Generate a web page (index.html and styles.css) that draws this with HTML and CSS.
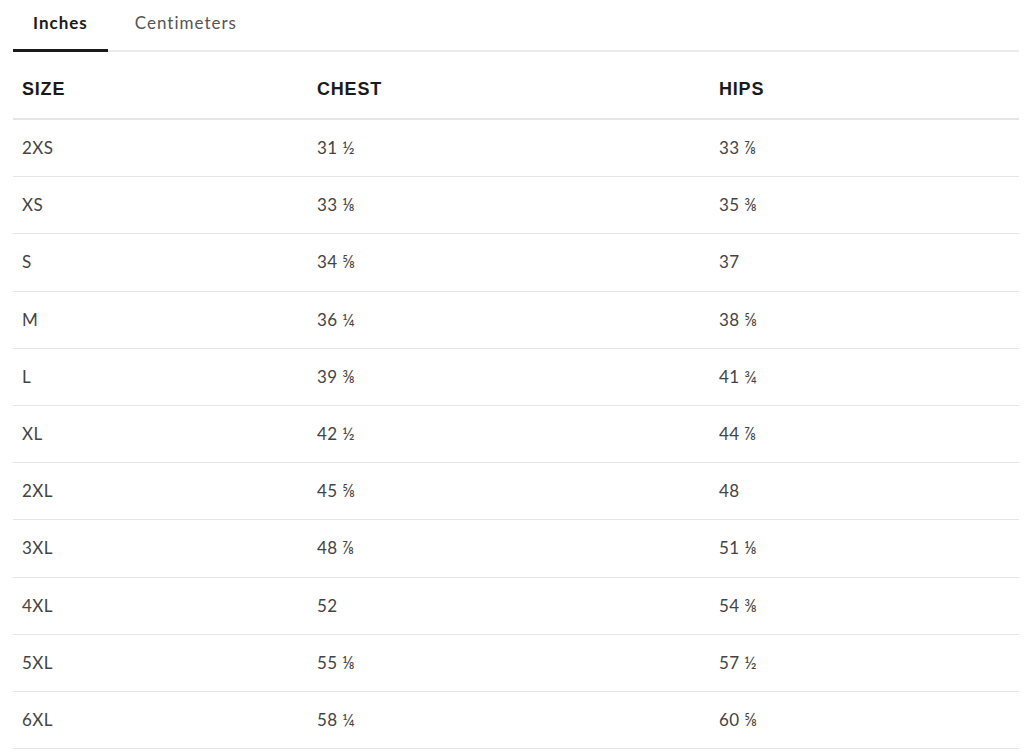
FILE: index.html
```html
<!DOCTYPE html>
<html>
<head>
<meta charset="utf-8">
<link rel="stylesheet" href="styles.css">
</head>
<body>
<div class="wrap">
  <div class="tabs">
    <div class="tab active">Inches</div>
    <div class="tab">Centimeters</div>
  </div>
  <table class="size-table">
    <colgroup>
      <col class="c1"><col class="c2"><col class="c3">
    </colgroup>
    <thead>
      <tr><th>SIZE</th><th>CHEST</th><th>HIPS</th></tr>
    </thead>
    <tbody>
      <tr><td>2XS</td><td>31 ½</td><td>33 ⅞</td></tr>
      <tr><td>XS</td><td>33 ⅛</td><td>35 ⅜</td></tr>
      <tr><td>S</td><td>34 ⅝</td><td>37</td></tr>
      <tr><td>M</td><td>36 ¼</td><td>38 ⅝</td></tr>
      <tr><td>L</td><td>39 ⅜</td><td>41 ¾</td></tr>
      <tr><td>XL</td><td>42 ½</td><td>44 ⅞</td></tr>
      <tr><td>2XL</td><td>45 ⅝</td><td>48</td></tr>
      <tr><td>3XL</td><td>48 ⅞</td><td>51 ⅛</td></tr>
      <tr><td>4XL</td><td>52</td><td>54 ⅜</td></tr>
      <tr><td>5XL</td><td>55 ⅛</td><td>57 ½</td></tr>
      <tr><td>6XL</td><td>58 ¼</td><td>60 ⅝</td></tr>
    </tbody>
  </table>
</div>
</body>
</html>
```
FILE: styles.css
```css
html, body {
  margin: 0;
  padding: 0;
  background: #fff;
}
body {
  font-family: "Lato", "Liberation Sans", sans-serif;
  color: #444;
}
.wrap {
  padding: 0 14px 0 13px;
}
.tabs {
  display: flex;
  gap: 7px;
  border-bottom: 2px solid #ebebeb;
  height: 52px;
  box-sizing: border-box;
}
.tab {
  padding: 12px 20px 0;
  font-size: 17px;
  line-height: 22px;
  color: #555;
  letter-spacing: 1px;
  box-sizing: border-box;
  height: 52px;
  margin-bottom: -2px;
}
.tab.active {
  font-weight: 700;
  color: #1a1a1a;
  border-bottom: 3px solid #1a1a1a;
}
.size-table {
  width: 100%;
  border-collapse: collapse;
  table-layout: fixed;
}
.c1 { width: 295px; }
.c2 { width: 402px; }
.c3 { width: auto; }
th {
  text-align: left;
  font-family: "Liberation Sans", Arial, sans-serif;
  font-weight: 700;
  font-size: 18px;
  letter-spacing: 0.8px;
  color: #1a1a1a;
  line-height: 20px;
  padding: 27px 9px 19px;
  border-bottom: 2px solid #e5e5e5;
}
td {
  font-size: 17px;
  line-height: 20px;
  padding: 18.1px 9px;
  color: #444;
  letter-spacing: 0.4px;
  border-bottom: 1px solid #e5e5e5;
}
```
